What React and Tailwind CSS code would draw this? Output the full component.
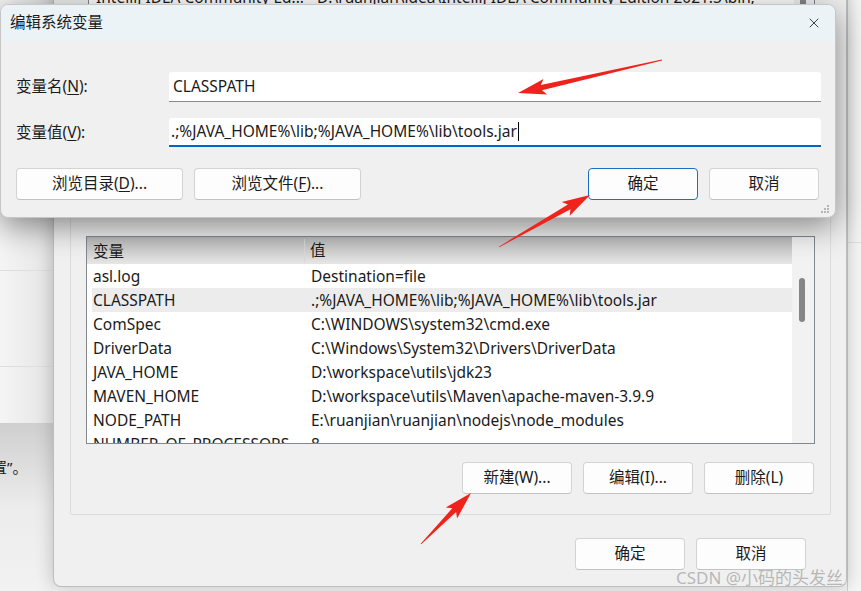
import React from 'react';
import { X } from 'lucide-react';

const font = { fontFamily: '"Noto Sans", "Noto Sans CJK SC", sans-serif' };

const rows = [
  ['asl.log', 'Destination=file'],
  ['CLASSPATH', '.;%JAVA_HOME%\\lib;%JAVA_HOME%\\lib\\tools.jar'],
  ['ComSpec', 'C:\\WINDOWS\\system32\\cmd.exe'],
  ['DriverData', 'C:\\Windows\\System32\\Drivers\\DriverData'],
  ['JAVA_HOME', 'D:\\workspace\\utils\\jdk23'],
  ['MAVEN_HOME', 'D:\\workspace\\utils\\Maven\\apache-maven-3.9.9'],
  ['NODE_PATH', 'E:\\ruanjian\\ruanjian\\nodejs\\node_modules'],
  ['NUMBER_OF_PROCESSORS', '8'],
];

const arrowPoints = (tx, ty, hx, hy) => {
  const dx = hx - tx;
  const dy = hy - ty;
  const len = Math.hypot(dx, dy);
  const ux = dx / len;
  const uy = dy / len;
  const nx = -uy;
  const ny = ux;
  const head = 24;
  const bx = hx - ux * head;
  const by = hy - uy * head;
  const wx = hx - ux * (head + 4);
  const wy = hy - uy * (head + 4);
  const pts = [
    [tx + nx * 0.4, ty + ny * 0.4],
    [bx + nx * 2.6, by + ny * 2.6],
    [wx + nx * 8, wy + ny * 8],
    [hx, hy],
    [wx - nx * 8, wy - ny * 8],
    [bx - nx * 2.6, by - ny * 2.6],
    [tx - nx * 0.4, ty - ny * 0.4],
  ];
  return pts.map((p) => p.map((v) => v.toFixed(1)).join(',')).join(' ');
};

const Btn = ({ children, focused, className = '' }) => (
  <button
    className={`h-[32px] w-[110px] rounded-[4px] bg-[#fdfdfd] text-[15.5px] text-[#1b1b1b] ${
      focused ? 'border border-[#1a6fc4]' : 'border border-[#d3d3d3] border-b-[#c2c2c2]'
    } ${className}`}
  >
    {children}
  </button>
);

const VarsTable = () => (
  <div className="flex h-[208px] w-[729px] border border-[#828790] bg-white">
    <div className="flex w-[705px] flex-col">
      <div className="flex h-[27px] items-center bg-gradient-to-b from-[#b9b9b9] to-[#e6e6e6]">
        <div className="w-[218px] border-r border-[#d8d8d8] pl-[6px] leading-[24px]">变量</div>
        <div className="pl-[5px]">值</div>
      </div>
      <div className="flex-1 overflow-hidden">
        {rows.map(([k, v], i) => (
          <div
            key={k}
            className={`ml-[5px] flex h-[24px] items-center pt-[1px] ${i === 1 ? 'bg-[#ececec]' : ''}`}
          >
            <div className="w-[213px] pl-[1px] whitespace-nowrap">{k}</div>
            <div className="pl-[6px] whitespace-nowrap">{v}</div>
          </div>
        ))}
      </div>
    </div>
    <div className="flex w-[22px] flex-col bg-[#f2f2f2]">
      <div className="mt-[41px] ml-[7px] h-[44px] w-[6px] rounded-[3px] bg-[#868686]" />
    </div>
  </div>
);

const BackWindow = () => (
  <div className="absolute left-[53px] top-[-15px] h-[602px] w-[794px] rounded-b-lg border-x border-b border-[#bdbdbd] bg-[#f0f0f0] shadow-[0_0_18px_rgba(0,0,0,0.22)]">
    {/* tail of the user variables list above */}
    <div className="ml-[34px] flex h-[24px] w-[727px] border-x border-[#828790] bg-white text-[15.5px]">
      <div className="w-[225px] pl-[7px] leading-[24px] whitespace-nowrap overflow-hidden">IntelliJ IDEA Community Ed...</div>
      <div className="pl-[3px] leading-[24px] whitespace-nowrap overflow-hidden w-[480px]">D:\ruanjian\idea\IntelliJ IDEA Community Edition 2021.3\bin;</div>
      <div className="ml-auto w-[20px] bg-[#f2f2f2]">
        <div className="ml-[6px] h-full w-[6px] bg-[#868686]" />
      </div>
    </div>

    <div className="mt-[206px] flex">
      <div className="ml-[16px] flex h-[300px] w-[761px] flex-col rounded-[2px] border border-[#dcdcdc] pl-[15px] pt-[20px] pr-[15px]">
        <VarsTable />
        <div className="mt-[18px] flex justify-end gap-[11px] pr-[1px]">
          <Btn>新建(W)...</Btn>
          <Btn>编辑(I)...</Btn>
          <Btn>删除(L)</Btn>
        </div>
      </div>
    </div>

    <div className="mt-[23px] flex justify-end gap-[11px] pr-[40px]">
      <Btn>确定</Btn>
      <Btn>取消</Btn>
    </div>
  </div>
);

const EditDialog = () => (
  <div className="absolute left-0 top-[4px] h-[214px] w-[836px] overflow-hidden rounded-lg border border-[#c6c6c6] bg-[#f0f0f0] shadow-[0_8px_32px_rgba(0,0,0,0.45)]">
    <div className="flex h-[36px] items-center bg-[#ebf3f7] pl-[9px] pr-[13px]">
      <span className="text-[15.5px] text-[#1b1b1b]">编辑系统变量</span>
      <X className="ml-auto h-[16px] w-[16px] text-[#222]" strokeWidth={1.3} />
    </div>

    <div className="mt-[31px] flex items-center">
      <div className="w-[168px] pl-[15px]">
        变量名(<span className="underline underline-offset-2">N</span>):
      </div>
      <div className="flex h-[30px] w-[652px] items-center rounded-t-[3px] border-b border-[#8a8a8a] bg-white pl-[4px]">
        CLASSPATH
      </div>
    </div>

    <div className="mt-[16px] flex items-center">
      <div className="w-[168px] pl-[15px]">
        变量值(<span className="underline underline-offset-2">V</span>):
      </div>
      <div className="flex h-[29px] w-[652px] items-center rounded-t-[3px] border-b-2 border-[#0067c0] bg-white pl-[2px]">
        <span>.;%JAVA_HOME%\lib;%JAVA_HOME%\lib\tools.jar</span>
        <span className="ml-[1px] h-[19px] w-px bg-black" />
      </div>
    </div>

    <div className="mt-[21px] flex items-center pl-[15px]">
      <Btn className="w-[167px]">
        浏览目录(<span className="underline underline-offset-2">D</span>)...
      </Btn>
      <Btn className="ml-[11px] w-[167px]">
        浏览文件(<span className="underline underline-offset-2">F</span>)...
      </Btn>
      <Btn focused className="ml-auto">确定</Btn>
      <Btn className="ml-[11px] mr-[16px]">取消</Btn>
    </div>

    <svg className="absolute bottom-[3px] right-[5px]" width="10" height="10" viewBox="0 0 10 10">
      <g fill="#b5b5b5">
        <rect x="7" y="1" width="2" height="2" />
        <rect x="4" y="4" width="2" height="2" />
        <rect x="7" y="4" width="2" height="2" />
        <rect x="1" y="7" width="2" height="2" />
        <rect x="4" y="7" width="2" height="2" />
        <rect x="7" y="7" width="2" height="2" />
      </g>
    </svg>
  </div>
);

export default function App() {
  return (
    <div
      className="relative h-[591px] w-[861px] overflow-hidden bg-[#f4f4f4] text-[15.5px] text-[#1b1b1b]"
      style={font}
    >
      {/* desktop strip to the left */}
      <div className="flex h-full w-[54px] flex-col bg-gradient-to-r from-[#f5f5f5] to-[#e4e4e4]">
        <div className="h-[271px] border-b border-[#dedede]" />
        <div className="h-[96px] border-b border-[#dedede]" />
        <div className="h-[56px]" />
        <div className="flex-1 bg-gradient-to-b from-[#cfcfcf] via-[#ececec] to-[#f2f2f2]">
          <div className="mt-[33px] -ml-[8px] whitespace-nowrap text-[15px]">置”。</div>
        </div>
      </div>

      {/* right strip */}
      <div className="absolute right-0 top-0 h-full w-[14px] border-l border-[#cfcfcf] bg-[#f6f6f6]">
        <div className="mt-[242px] border-t border-[#e2e2e2]" />
      </div>

      <BackWindow />
      <EditDialog />

      <svg className="pointer-events-none absolute left-0 top-0" width="861" height="591">
        <polygon points={arrowPoints(662, 60, 518, 93)} fill="#f0231c" />
        <polygon points={arrowPoints(499, 247, 590, 195)} fill="#f0231c" />
        <polygon points={arrowPoints(421, 544, 471, 493)} fill="#f0231c" />
      </svg>

      <div className="pointer-events-none absolute left-[676px] top-[565px] whitespace-nowrap text-[17px] text-[#a8a8a8]/80">
        CSDN @小码的头发丝
      </div>
    </div>
  );
}
